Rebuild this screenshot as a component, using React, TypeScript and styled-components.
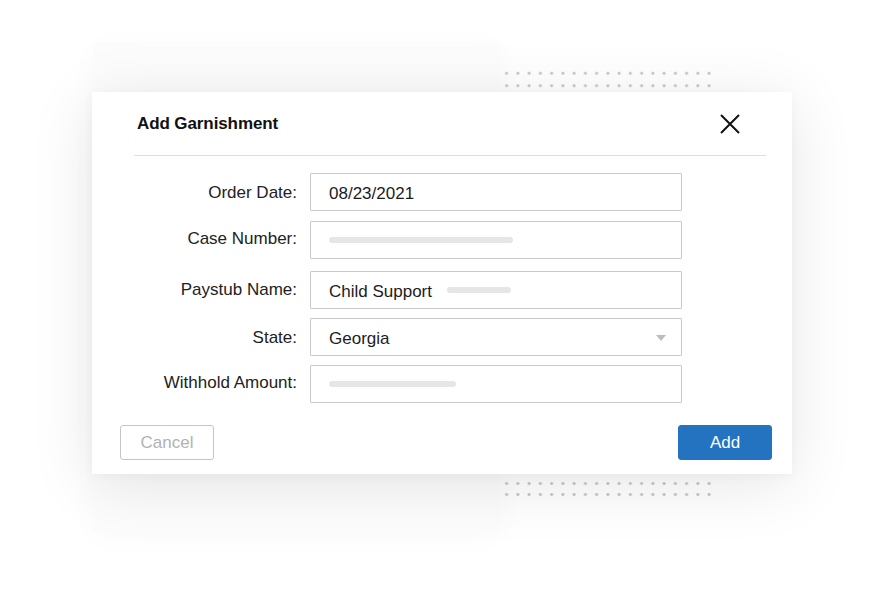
import styled, { createGlobalStyle } from 'styled-components'

const GlobalStyle = createGlobalStyle`
  html, body {
    margin: 0;
    padding: 0;
    background: #ffffff;
  }
  body {
    font-family: "Liberation Sans", Arial, sans-serif;
    color: #1f1f1f;
  }
`

// Page canvas
const Stage = styled.div`
  position: relative;
  width: 884px;
  height: 612px;
  overflow: hidden;
  padding: 92px 0 0 92px;
  box-sizing: border-box;
`

const BackCard = styled.div`
  position: absolute;
  left: 93px;
  top: 42px;
  width: 407px;
  height: 488px;
  background: #fcfcfc;
  box-shadow: 0 6px 30px rgba(0, 0, 0, 0.025);
`

const Dots = styled.div<{ $top: number; $rowGap: number }>`
  position: absolute;
  left: 501px;
  top: ${(p) => p.$top}px;
  width: 214px;
  height: ${(p) => p.$rowGap * 2}px;
  background-image: radial-gradient(circle, #c9c9c9 1.3px, transparent 1.8px);
  background-size: 11.26px ${(p) => p.$rowGap}px;
`

// Modal
const Modal = styled.div`
  position: relative;
  width: 700px;
  height: 382px;
  background: #ffffff;
  box-shadow: 0 10px 60px rgba(0, 0, 0, 0.1), 0 2px 10px rgba(0, 0, 0, 0.03);
  display: flex;
  flex-direction: column;
  box-sizing: border-box;
`

const Header = styled.div`
  display: flex;
  align-items: center;
  justify-content: space-between;
  height: 63px;
  margin: 0 26px 0 42px;
  padding: 0 26px 0 3px;
  border-bottom: 1px solid #dedede;
`

const Title = styled.h2`
  margin: 0;
  font-size: 17px;
  font-weight: 700;
  color: #111;
  letter-spacing: -0.1px;
`

const CloseButton = styled.button`
  border: none;
  background: none;
  padding: 0;
  width: 20px;
  height: 20px;
  display: flex;
  align-items: center;
  justify-content: center;
  cursor: pointer;
`

const Form = styled.div`
  display: grid;
  grid-template-columns: 205px 372px;
  column-gap: 13px;
  row-gap: 10px;
  margin-top: 17px;
`

const Label = styled.label<{ $shift?: number }>`
  text-align: right;
  font-size: 17px;
  color: #222;
  align-self: center;
  margin-top: ${(p) => p.$shift ?? 0}px;
`

const Field = styled.div<{ $shift?: number }>`
  position: relative;
  height: 38px;
  border: 1px solid #c9c9c9;
  border-radius: 1px;
  box-sizing: border-box;
  display: flex;
  align-items: center;
  padding: 3px 0 0 18px;
  margin-top: ${(p) => p.$shift ?? 0}px;
  margin-bottom: ${(p) => -(p.$shift ?? 0)}px;
  font-size: 17px;
  color: #1c1c1c;
  gap: 15px;
`

const Placeholder = styled.span<{ $width: number }>`
  display: block;
  width: ${(p) => p.$width}px;
  height: 6px;
  margin-top: -3px;
  border-radius: 3px;
  background: #e6e6e6;
`

const Caret = styled.span`
  position: absolute;
  right: 15px;
  top: 16px;
  width: 0;
  height: 0;
  border-left: 5.5px solid transparent;
  border-right: 5.5px solid transparent;
  border-top: 6px solid #bdbdbd;
`

const Footer = styled.div`
  display: flex;
  justify-content: space-between;
  align-items: center;
  margin: 22px 20px 0 28px;
`

const Button = styled.button<{ $primary?: boolean }>`
  width: 94px;
  height: 35px;
  border-radius: 3px;
  font-family: "Liberation Sans", Arial, sans-serif;
  font-size: 17px;
  cursor: pointer;
  border: 1px solid ${(p) => (p.$primary ? '#2473c1' : '#c4c4c4')};
  background: ${(p) => (p.$primary ? '#2473c1' : '#ffffff')};
  color: ${(p) => (p.$primary ? '#ffffff' : '#b2b2b2')};
`

const rows = [
  { label: 'Order Date:', value: '08/23/2021', labelShift: 1 },
  { label: 'Case Number:', bar: 184, labelShift: -3 },
  { label: 'Paystub Name:', value: 'Child Support', bar: 64, shift: 2, labelShift: 3 },
  { label: 'State:', value: 'Georgia', select: true, shift: 1, labelShift: 3 },
  { label: 'Withhold Amount:', bar: 127, labelShift: -2 },
]

export default function App() {
  return (
    <>
      <GlobalStyle />
      <Stage>
        <BackCard />
        <Dots $top={67} $rowGap={12.5} />
        <Dots $top={478} $rowGap={11} />
        <Modal>
          <Header>
            <Title>Add Garnishment</Title>
            <CloseButton aria-label="Close">
              <svg width="20" height="20" viewBox="0 0 20 20">
                <path d="M1 1 L19 19 M19 1 L1 19" stroke="#111" strokeWidth="2" fill="none" />
              </svg>
            </CloseButton>
          </Header>
          <Form>
            {rows.map((r) => [
              <Label key={r.label + '-l'} $shift={r.labelShift}>
                {r.label}
              </Label>,
              <Field key={r.label + '-f'} $shift={r.shift}>
                {r.value && <span>{r.value}</span>}
                {r.bar && <Placeholder $width={r.bar} />}
                {r.select && <Caret />}
              </Field>,
            ])}
          </Form>
          <Footer>
            <Button>Cancel</Button>
            <Button $primary>Add</Button>
          </Footer>
        </Modal>
      </Stage>
    </>
  )
}
